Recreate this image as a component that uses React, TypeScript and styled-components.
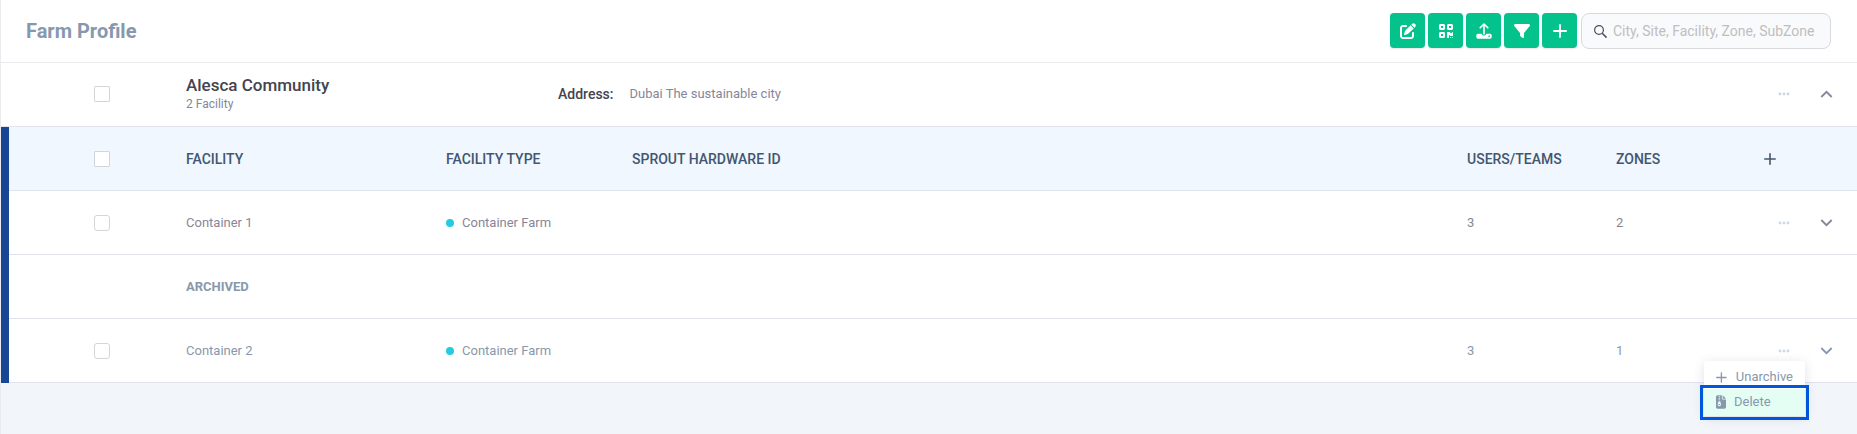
import React from 'react';
import styled, { createGlobalStyle } from 'styled-components';
import { FaPenToSquare, FaQrcode, FaFilter, FaFileZipper } from 'react-icons/fa6';

const GlobalStyle = createGlobalStyle`
  *, *::before, *::after { box-sizing: border-box; }
  body {
    margin: 0;
    min-height: 100vh;
    background: #f2f5fa;
    font-family: Roboto, 'Liberation Sans', sans-serif;
    font-size: 13px;
    line-height: 16px;
    color: #878699;
  }
  button, input { font: inherit; }
`;

const Page = styled.main`
  min-height: 100vh;
  border-left: 1px solid #e9ebef;
`;

const Header = styled.header`
  display: flex;
  align-items: center;
  justify-content: space-between;
  height: 63px;
  padding: 0 26px 0 25px;
  background: #fff;
  border-bottom: 1px solid #ebebef;
`;

const Title = styled.h1`
  margin: 0;
  font-size: 20px;
  line-height: 24px;
  font-weight: 700;
  color: #8798ad;
`;

const Toolbar = styled.div`
  display: flex;
  align-items: flex-start;
  gap: 3px;
`;

const ToolButton = styled.button`
  display: grid;
  place-items: center;
  width: 35px;
  height: 35px;
  padding: 0;
  border: 0;
  border-radius: 4px;
  background: #04c28c;
  color: #fff;
  box-shadow: 0 1px 2px rgba(0, 0, 0, 0.1);
  cursor: pointer;
`;

const SearchBox = styled.label`
  display: flex;
  align-items: center;
  gap: 5px;
  width: 250px;
  height: 36px;
  margin-left: 1px;
  padding: 0 11px;
  border: 1px solid #d9d9dc;
  border-radius: 8px;
  background: #f9fafc;
  color: #4d4f5c;
`;

const SearchInput = styled.input`
  flex: 1;
  min-width: 0;
  padding: 0;
  border: 0;
  outline: 0;
  background: none;
  font-size: 14px;
  color: #43425d;
  &::placeholder { color: #bfbfbf; opacity: 1; }
`;

const Community = styled.section`
  display: flex;
  align-items: center;
  height: 64px;
  padding: 0 24px 2px 93px;
  background: #fff;
  border-bottom: 1px solid #e1e4f0;
`;

const CommunityName = styled.div`
  width: 372px;
  margin-left: 76px;
`;

const CommunityTitle = styled.h2`
  margin: 0;
  font-size: 17px;
  line-height: 20px;
  font-weight: 500;
  color: #43444f;
`;

const Subtitle = styled.p`
  margin: 0;
  font-size: 12px;
  line-height: 18px;
`;

const Address = styled.dl`
  display: flex;
  flex: 1;
  gap: 16px;
  margin: 0;
  dt { font-size: 14px; font-weight: 500; color: #43444f; }
  dd { margin: 0; }
`;

const CheckBox = styled.input<{ $round?: boolean }>`
  appearance: none;
  display: block;
  width: 16px;
  height: 16px;
  margin: 0;
  border: 1px solid #d5d5d8;
  border-radius: ${p => (p.$round ? 3 : 1)}px;
  background: #fff;
  &:checked { background: #04c28c; }
`;

const Facilities = styled.div`
  border-left: 8px solid #184695;
`;

const Table = styled.table`
  width: 100%;
  table-layout: fixed;
  border-collapse: separate;
  border-spacing: 0;
  background: #fff;
`;

const Col = styled.col<{ $w?: number }>`
  width: ${p => (p.$w ? `${p.$w}px` : 'auto')};
`;

const HeadCell = styled.th`
  height: 64px;
  padding: 0;
  border-bottom: 1px solid #e1e4f0;
  background: #f0f7ff;
  text-align: left;
  font-size: 14px;
  font-weight: 500;
  color: #43566f;
`;

const Cell = styled.td<{ $muted?: boolean }>`
  height: 64px;
  padding: 0;
  border-bottom: 1px solid #e1e1f0;
  color: ${p => (p.$muted ? '#8798ad' : '#878699')};
`;

const SectionCell = styled(Cell).attrs({ as: 'th' })`
  text-align: left;
  font-weight: 700;
  color: #8798ad;
`;

const CheckSlot = styled.div`
  padding-left: 85px;
`;

const TypeLabel = styled.span`
  display: flex;
  align-items: center;
  gap: 8px;
  &::before {
    content: '';
    width: 8px;
    height: 8px;
    border-radius: 50%;
    background: #22cce2;
  }
`;

const Actions = styled.div`
  position: relative;
  display: flex;
  align-items: center;
  justify-content: flex-end;
  gap: 30px;
  padding-right: 24px;
`;

const CommunityActions = styled(Actions)`
  padding-right: 0;
`;

const IconButton = styled.button<{ $tone?: string }>`
  display: grid;
  place-items: center;
  height: 16px;
  padding: 0;
  border: 0;
  background: none;
  color: ${p => p.$tone || 'inherit'};
  cursor: pointer;
`;

const Menu = styled.div`
  position: absolute;
  top: 18px;
  right: 52px;
  z-index: 2;
  width: 101px;
  border-radius: 4px;
  background: #fff;
  box-shadow: 0 2px 12px rgba(67, 66, 93, 0.16);
`;

const MenuItem = styled.button<{ $active?: boolean }>`
  display: flex;
  align-items: center;
  gap: ${p => (p.$active ? 8 : 9)}px;
  width: 100%;
  height: ${p => (p.$active ? 27 : 28)}px;
  padding: ${p => (p.$active ? '0 12px' : '5px 12px 0')};
  border: 0;
  border-radius: ${p => (p.$active ? 0 : 4)}px;
  background: ${p => (p.$active ? '#e4fef3' : '#fff')};
  outline: ${p => (p.$active ? '3px solid #0057dc' : 'none')};
  outline-offset: 1px;
  color: #8798ad;
  cursor: pointer;
`;

const ArchiveIcon = styled(FaFileZipper)`
  width: 10px;
  height: 14px;
`;

const Plus = ({ size = 12, weight = 1.6 }: { size?: number; weight?: number }) => (
  <svg width={size} height={size} viewBox="0 0 12 12" fill="none" stroke="currentColor" strokeWidth={weight} strokeLinecap="round" aria-hidden>
    <path d="M6 .8v10.4M.8 6h10.4" />
  </svg>
);

const Dots = () => (
  <svg width="12" height="4" viewBox="0 0 12 4" fill="currentColor" aria-hidden>
    <circle cx="2" cy="2" r="1.4" />
    <circle cx="6" cy="2" r="1.4" />
    <circle cx="10" cy="2" r="1.4" />
  </svg>
);

const Chevron = ({ up }: { up?: boolean }) => (
  <svg width="13" height="8" viewBox="0 0 13 8" fill="none" stroke="currentColor" strokeWidth="1.8" aria-hidden>
    <path d={up ? 'M1.3 7l5.2-5.2L11.7 7' : 'M1.3 1l5.2 5.2L11.7 1'} />
  </svg>
);

const Upload = () => (
  <svg width="16" height="16" viewBox="0 0 16 16" fill="none" stroke="currentColor" aria-hidden>
    <path d="M8 11V1.2M4.2 4.8L8 1l3.8 3.8" strokeWidth="1.6" strokeLinecap="round" strokeLinejoin="round" />
    <path d="M2 10.7h3.7c.3 1.1 1.2 1.8 2.3 1.8s2-.7 2.3-1.8H14a1.7 1.7 0 0 1 1.7 1.7v1.7a1.7 1.7 0 0 1-1.7 1.7H2a1.7 1.7 0 0 1-1.7-1.7v-1.7A1.7 1.7 0 0 1 2 10.7zM13.2 12.5a.8.8 0 1 0 .01 0z" fill="currentColor" fillRule="evenodd" stroke="none" />
  </svg>
);

const Magnifier = () => (
  <svg width="15" height="15" viewBox="0 0 15 15" fill="none" stroke="currentColor" strokeWidth="1.2" aria-hidden>
    <circle cx="6" cy="6" r="4.4" />
    <path d="M9.2 9.2L13.6 13.6" strokeWidth="1.5" />
  </svg>
);

interface Facility {
  name: string;
  type: string;
  users: number;
  zones: number;
}

const active: Facility[] = [{ name: 'Container 1', type: 'Container Farm', users: 3, zones: 2 }];
const archived: Facility[] = [{ name: 'Container 2', type: 'Container Farm', users: 3, zones: 1 }];

const FacilityRow = ({ item, muted, children }: { item: Facility; muted?: boolean; children?: React.ReactNode }) => (
  <tr>
    <Cell>
      <CheckSlot><CheckBox type="checkbox" $round aria-label={`Select ${item.name}`} /></CheckSlot>
    </Cell>
    <Cell $muted={muted}>{item.name}</Cell>
    <Cell $muted={muted}><TypeLabel>{item.type}</TypeLabel></Cell>
    <Cell />
    <Cell $muted={muted}>{item.users}</Cell>
    <Cell $muted={muted}>{item.zones}</Cell>
    <Cell $muted={muted}>
      <Actions>
        <IconButton $tone="#cdd6e3" aria-label="More options"><Dots /></IconButton>
        <IconButton aria-label="Expand"><Chevron /></IconButton>
        {children}
      </Actions>
    </Cell>
  </tr>
);

export default function App() {
  return (
    <Page>
      <GlobalStyle />
      <Header>
        <Title>Farm Profile</Title>
        <Toolbar>
          <ToolButton aria-label="Edit"><FaPenToSquare size={16} /></ToolButton>
          <ToolButton aria-label="QR codes"><FaQrcode size={16} /></ToolButton>
          <ToolButton aria-label="Upload"><Upload /></ToolButton>
          <ToolButton aria-label="Filter"><FaFilter size={16} /></ToolButton>
          <ToolButton aria-label="Add"><Plus size={14} /></ToolButton>
          <SearchBox>
            <Magnifier />
            <SearchInput type="text" aria-label="Search" placeholder="City, Site, Facility, Zone, SubZone" />
          </SearchBox>
        </Toolbar>
      </Header>

      <Community>
        <CheckBox type="checkbox" aria-label="Select Alesca Community" />
        <CommunityName>
          <CommunityTitle>Alesca Community</CommunityTitle>
          <Subtitle>2 Facility</Subtitle>
        </CommunityName>
        <Address>
          <dt>Address:</dt>
          <dd>Dubai The sustainable city</dd>
        </Address>
        <CommunityActions>
          <IconButton $tone="#cdd6e3" aria-label="More options"><Dots /></IconButton>
          <IconButton $tone="#878699" aria-label="Collapse"><Chevron up /></IconButton>
        </CommunityActions>
      </Community>

      <Facilities>
        <Table>
          <colgroup>
            <Col $w={177} />
            <Col $w={260} />
            <Col $w={186} />
            <Col />
            <Col $w={149} />
            <Col $w={148} />
            <Col $w={93} />
          </colgroup>
          <thead>
            <tr>
              <HeadCell>
                <CheckSlot><CheckBox type="checkbox" aria-label="Select all facilities" /></CheckSlot>
              </HeadCell>
              <HeadCell>FACILITY</HeadCell>
              <HeadCell>FACILITY TYPE</HeadCell>
              <HeadCell>SPROUT HARDWARE ID</HeadCell>
              <HeadCell>USERS/TEAMS</HeadCell>
              <HeadCell>ZONES</HeadCell>
              <HeadCell>
                <IconButton $tone="#43566f" aria-label="Add facility"><Plus /></IconButton>
              </HeadCell>
            </tr>
          </thead>
          <tbody>
            {active.map(item => <FacilityRow key={item.name} item={item} />)}
            <tr>
              <Cell />
              <SectionCell colSpan={6}>ARCHIVED</SectionCell>
            </tr>
            {archived.map(item => (
              <FacilityRow key={item.name} item={item} muted>
                <Menu>
                  <MenuItem><Plus size={11} weight={1.5} />Unarchive</MenuItem>
                  <MenuItem $active><ArchiveIcon />Delete</MenuItem>
                </Menu>
              </FacilityRow>
            ))}
          </tbody>
        </Table>
      </Facilities>
    </Page>
  );
}
